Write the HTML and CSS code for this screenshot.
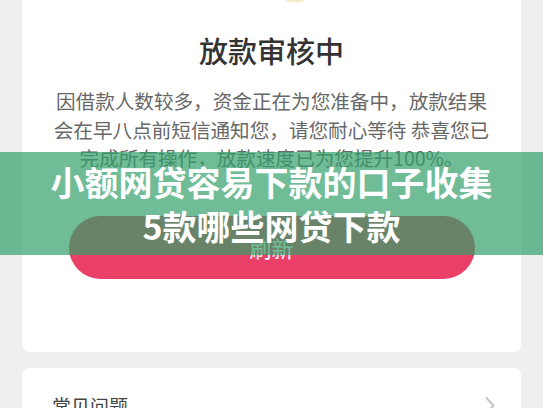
FILE: index.html
```html
<!DOCTYPE html>
<html lang="zh-CN">
<head>
<meta charset="utf-8">
<title>放款审核中</title>
<link rel="stylesheet" href="styles.css">
</head>
<body>
<main class="page">
  <section class="card status">
    <svg class="icon-tail" width="100" height="3" viewBox="0 0 100 3" aria-hidden="true">
      <ellipse cx="73" cy="0" rx="9" ry="2.5" fill="#f3ecc4"/>
    </svg>
    <h1 class="title">放款审核中</h1>
    <p class="desc">因借款人数较多，资金正在为您准备中，放款结果会在早八点前短信通知您，请您耐心等待 恭喜您已完成所有操作，放款速度已为您提升100%。</p>
    <button class="refresh" type="button">刷新</button>
  </section>
  <section class="card faq">
    <span class="faq-label">常见问题</span>
    <svg class="chevron" width="10" height="18" viewBox="0 0 10 18" aria-hidden="true">
      <polyline points="1.5,1 8.5,8.5 1.5,16" fill="none" stroke="#c4c4c4" stroke-width="2" stroke-linecap="round" stroke-linejoin="round"/>
    </svg>
  </section>
</main>
<div class="banner">
  <p class="banner-text">小额网贷容易下款的口子收集<br>5款哪些网贷下款</p>
</div>
</body>
</html>
```

FILE: styles.css
```css
html, body {
  margin: 0;
  padding: 0;
  height: 100%;
  overflow: hidden;
}

body {
  background: #efefef;
  font-family: "Noto Sans CJK SC", "Noto Sans", "Liberation Sans", sans-serif;
  position: relative;
}

.page {
  display: flex;
  flex-direction: column;
  gap: 16px;
  padding: 0 22px;
}

.card {
  background: #ffffff;
  border-radius: 8px;
}

.status {
  border-radius: 0 0 8px 8px;
  display: flex;
  flex-direction: column;
  align-items: center;
  padding: 0 27px 73px;
}

.icon-tail {
  display: block;
}

.title {
  margin: 33px 0 0;
  font-size: 29px;
  line-height: 29px;
  font-weight: 500;
  color: #333333;
}

.desc {
  margin: 22px 0 0;
  font-size: 19.6px;
  line-height: 28.5px;
  color: #676767;
  text-align: center;
}

.refresh {
  margin-top: 43px;
  width: 406px;
  height: 63px;
  border: none;
  border-radius: 32px;
  background: #ea4068;
  color: #ffffff;
  font-family: inherit;
  font-size: 22px;
  line-height: 22px;
  padding: 0;
}

.faq {
  display: flex;
  align-items: flex-start;
  justify-content: space-between;
  padding: 28px 26px 28px 30px;
}

.faq-label {
  font-size: 19px;
  line-height: 19px;
  color: #444444;
}

.chevron {
  display: block;
  margin-top: 1px;
}

.banner {
  position: absolute;
  left: 0;
  right: 0;
  top: 152px;
  height: 103px;
  background: rgba(50, 160, 105, 0.7);
  display: flex;
  align-items: center;
  justify-content: center;
}

.banner-text {
  margin: 0;
  color: #ffffff;
  font-size: 34px;
  line-height: 44px;
  font-weight: 700;
  text-align: center;
}
```
